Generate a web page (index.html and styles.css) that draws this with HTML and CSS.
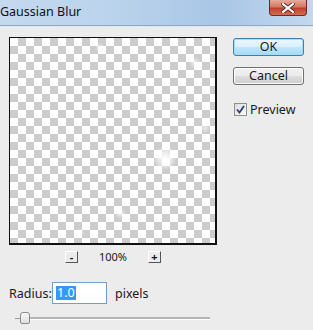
FILE: index.html
```html
<!DOCTYPE html>
<html>
<head>
<meta charset="utf-8">
<link rel="stylesheet" href="styles.css">
</head>
<body>
<div class="window">
  <div class="titlebar">
    <span class="title">Gaussian Blur</span>
    <span class="close"><svg width="14" height="10" viewBox="0 0 14 10"><path d="M2 1 L12 9 M12 1 L2 9" stroke="#5a2a22" stroke-width="4" stroke-linecap="square"/><path d="M2 1 L12 9 M12 1 L2 9" stroke="#fff" stroke-width="2.2" stroke-linecap="square"/></svg></span>
  </div>
  <div class="main">
    <div class="preview-col">
      <div class="preview"></div>
      <div class="zoombar">
        <span class="zbtn">-</span>
        <span class="zoomval">100%</span>
        <span class="zbtn">+</span>
      </div>
    </div>
    <div class="buttons">
      <div class="btn btn-default">OK</div>
      <div class="btn">Cancel</div>
      <label class="check"><span class="box"><svg width="9" height="9" viewBox="0 0 9 9"><path d="M1 4.5 L3.5 7.5 L8 1" fill="none" stroke="#2a3f7a" stroke-width="1.8"/></svg></span>Preview</label>
    </div>
  </div>
  <div class="radius-row">
    <span class="lbl">Radius:</span>
    <span class="input"><span class="sel">1.0</span></span>
    <span class="unit">pixels</span>
  </div>
  <div class="slider">
    <span class="tick"></span>
    <span class="thumb"></span>
    <span class="track"></span>
  </div>
</div>
</body>
</html>
```

FILE: styles.css
```css
html, body {
  margin: 0;
  padding: 0;
}
body {
  width: 313px;
  height: 330px;
  overflow: hidden;
  background: #ececec;
  font-family: "Noto Sans", "Open Sans", sans-serif;
  font-size: 12px;
  color: #1a1a1a;
}
.window {
  display: flex;
  flex-direction: column;
  height: 330px;
}
.titlebar {
  height: 25px;
  flex: none;
  display: flex;
  justify-content: space-between;
  align-items: flex-start;
  background: linear-gradient(to right, #c5d9ee 0%, #b9d2ec 40%, #a9c6e6 70%, #c3d8ee 100%);
  border-bottom: 1px solid #8fa8c4;
  box-shadow: 0 1px 0 #dce8f4;
}
.title {
  padding: 4px 0 0 0;
  font-size: 12.5px;
  line-height: 16px;
  color: #111;
}
.close {
  width: 38px;
  height: 16px;
  margin-right: 6px;
  box-sizing: border-box;
  border: 1px solid #6d2a20;
  border-top: none;
  border-radius: 0 0 4px 4px;
  background: linear-gradient(to bottom, #e9a99a 0%, #d47a66 45%, #c0402a 55%, #d66d55 100%);
  display: flex;
  align-items: center;
  justify-content: center;
}
.main {
  display: flex;
  padding: 11px 0 0 9px;
}
.preview-col {
  width: 208px;
  display: flex;
  flex-direction: column;
}
.preview {
  width: 208px;
  height: 208px;
  box-sizing: border-box;
  border: 1px solid #111;
  border-right-width: 2px;
  border-bottom-width: 2px;
  background:
    radial-gradient(circle at 155px 120px, rgba(255,255,255,0.95) 0, rgba(255,255,255,0.6) 6px, rgba(255,255,255,0) 12px),
    radial-gradient(circle at 90px 10px, rgba(255,255,255,0.8) 0, rgba(255,255,255,0) 5px),
    radial-gradient(circle at 185px 25px, rgba(255,255,255,0.7) 0, rgba(255,255,255,0) 6px),
    radial-gradient(circle at 110px 175px, rgba(255,255,255,0.7) 0, rgba(255,255,255,0) 6px),
    radial-gradient(circle at 70px 195px, rgba(255,255,255,0.6) 0, rgba(255,255,255,0) 5px),
    radial-gradient(circle at 195px 90px, rgba(255,255,255,0.6) 0, rgba(255,255,255,0) 5px),
    repeating-conic-gradient(#cccccc 0 25%, #ffffff 0 50%) 0 0 / 16px 16px;
}
.zoombar {
  display: flex;
  justify-content: center;
  align-items: center;
  gap: 21px;
  margin-top: 5px;
  height: 14px;
}
.zbtn {
  width: 13px;
  height: 12px;
  box-sizing: border-box;
  border: 1px solid #fff;
  border-right-color: #555;
  border-bottom-color: #555;
  background: #ececec;
  font-size: 11px;
  line-height: 9px;
  text-align: center;
  font-weight: bold;
}
.zoomval {
  font-size: 11px;
  line-height: 14px;
}
.buttons {
  display: flex;
  flex-direction: column;
  margin-left: 16px;
  width: 71px;
  padding-top: 1px;
}
.btn {
  height: 18px;
  box-sizing: border-box;
  border: 1px solid #707070;
  border-radius: 3px;
  background: linear-gradient(to bottom, #f2f2f2 0%, #ebebeb 50%, #dddddd 51%, #cfcfcf 100%);
  text-align: center;
  font-size: 12.5px;
  line-height: 16px;
  margin-bottom: 11px;
  box-shadow: inset 0 0 0 1px #fcfcfc;
}
.btn-default {
  border-color: #3c7fb1;
  background: linear-gradient(to bottom, #eaf6fd 0%, #d9f0fc 50%, #bee6fd 51%, #a7d9f5 100%);
  box-shadow: inset 0 0 0 1px #9ee0fb;
}
.check {
  display: flex;
  align-items: center;
  gap: 3px;
  font-size: 12.5px;
  margin-top: 5px;
  margin-left: 1px;
}
.box {
  width: 13px;
  height: 13px;
  box-sizing: border-box;
  border: 1px solid #8f8f8f;
  background: linear-gradient(135deg, #dcdcdc, #fbfbfb);
  display: flex;
  align-items: center;
  justify-content: center;
}
.radius-row {
  display: flex;
  align-items: center;
  padding-left: 9px;
  margin-top: 18px;
  height: 22px;
}
.lbl {
  font-size: 12.5px;
  width: 43px;
}
.input {
  width: 55px;
  height: 22px;
  box-sizing: border-box;
  border: 1px solid #7a9cc0;
  background: #fff;
  display: flex;
  align-items: center;
  padding-left: 3px;
}
.sel {
  background: #3399ff;
  color: #fff;
  font-size: 12.5px;
  line-height: 14px;
  padding: 0 1px;
}
.unit {
  margin-left: 8px;
  font-size: 12.5px;
}
.slider {
  display: flex;
  align-items: center;
  padding-left: 15px;
  margin-top: 8px;
  height: 12px;
}
.tick {
  width: 5px;
  height: 1px;
  background: #999;
}
.thumb {
  width: 10px;
  height: 12px;
  box-sizing: border-box;
  border: 1px solid #8a8a8a;
  border-radius: 3px 3px 2px 2px;
  background: linear-gradient(to bottom, #fafafa, #dedede);
}
.track {
  width: 180px;
  height: 2px;
  background: #b5b5b5;
  border-bottom: 1px solid #fff;
}
```
